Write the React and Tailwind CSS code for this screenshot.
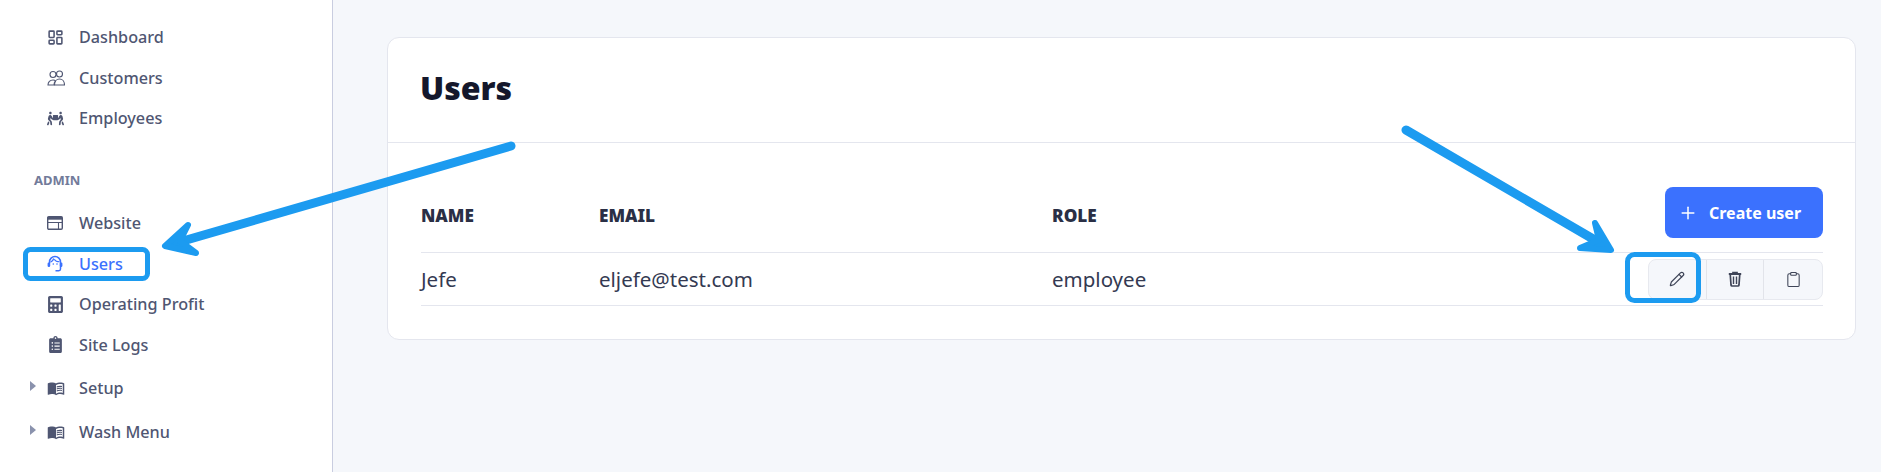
import { Clipboard, LayoutDashboard, Pencil, Plus } from 'lucide-react';
import { FaCalculator, FaClipboardList, FaPeopleCarry } from 'react-icons/fa';
import { MdMenuBook } from 'react-icons/md';

const FONT = "font-['Noto_Sans','Open_Sans',sans-serif]";

const CustomersIcon = () => (
  <svg width="18" height="18" viewBox="0 0 18 18" fill="none" stroke="currentColor" strokeWidth="1.1">
    <circle cx="6" cy="5.500" r="3" />
    <circle cx="12.500" cy="5" r="3" />
    <path d="M1 16c0-3 2-5 5-5 1 0 2 .3 2.500 1-1 1-1.500 2.500-1.500 4z" />
    <path d="M7.500 16c0-3.500 2.200-6 5-6s5 2.500 5 6z" />
  </svg>
);

const WindowIcon = () => (
  <svg width="16" height="14" viewBox="0 0 16 14" fill="none" stroke="currentColor" strokeWidth="1.4">
    <rect x=".7" y=".7" width="14.600" height="12.600" rx="1.200" />
    <path d="M.7 2.200h14.600" strokeWidth="3" />
    <path d="M1 6.500h14M11.500 6.500v6.500" strokeWidth="1.100" />
  </svg>
);

const HeadsetIcon = () => (
  <svg width="16" height="17" viewBox="0 0 16 17" fill="none" stroke="currentColor" strokeWidth="1.500">
    <path d="M2.500 8.500V7a5.500 5.500 0 0 1 11 0v7c0 1-.7 1.700-1.700 1.700H8.500" />
    <path d="M6.700 3.500C6.300 5.200 5.300 6.500 3.500 7.200" strokeWidth="1.200" />
    <path d="M7.200 4.200C8.300 6 10 6.800 12.500 6.800" strokeWidth="1.100" />
    <circle cx="6.300" cy="9" r=".8" fill="currentColor" stroke="none" />
    <circle cx="10" cy="9" r=".8" fill="currentColor" stroke="none" />
    <rect x=".6" y="7.500" width="2.600" height="4.500" rx="1.200" fill="currentColor" stroke="none" />
    <rect x="12.800" y="7.500" width="2.600" height="4.500" rx="1.200" fill="currentColor" stroke="none" />
  </svg>
);

const TrashIcon = () => (
  <svg width="14" height="16" viewBox="0 0 14 16" fill="none" stroke="currentColor" strokeWidth="1.700">
    <path d="M.8 3h12.400" strokeWidth="2" />
    <path d="M4.800 2.500V1.300h4.400v1.200" strokeWidth="1.300" />
    <path d="M2.300 4l.7 10c.1.600.4 1 1 1h6c.6 0 .9-.4 1-1l.7-10" />
    <path d="M5.500 5.500v7.500M8.500 5.500v7.500" strokeWidth="1.400" />
  </svg>
);

const Caret = () => (
  <svg width="6" height="10" viewBox="0 0 6 10" className="absolute top-[2px] left-[-16px] fill-[#8a92ad]">
    <path d="M0 0l6 5-6 5z" />
  </svg>
);

const MAIN_LINKS = [
  { label: 'Dashboard', icon: <LayoutDashboard size={17} strokeWidth={2.2} /> },
  { label: 'Customers', icon: <CustomersIcon /> },
  { label: 'Employees', icon: <FaPeopleCarry size={17} /> },
];

const ADMIN_LINKS = [
  { label: 'Website', icon: <WindowIcon /> },
  { label: 'Users', icon: <HeadsetIcon />, active: true },
  { label: 'Operating Profit', icon: <FaCalculator size={17} /> },
  { label: 'Site Logs', icon: <FaClipboardList size={17} /> },
];

const MENU_LINKS = [
  { label: 'Setup', icon: <MdMenuBook size={18} /> },
  { label: 'Wash Menu', icon: <MdMenuBook size={18} /> },
];

const NavRow = ({ label, icon, active, caret, tall }) => (
  <a
    href="#"
    className={`flex items-center pl-[46px] text-[16.200px] font-medium ${tall ? 'h-[44px]' : 'h-[40.500px]'} ${
      active ? 'text-[#3b71fe]' : 'text-[#4f5672]'
    }`}
  >
    <span className="relative flex w-[33px] items-center pl-[1px]">
      {caret && <Caret />}
      {icon}
    </span>
    {label}
  </a>
);

const Sidebar = () => (
  <aside className="h-full w-[333px] shrink-0 border-r border-[#c9cde0] bg-white pt-[17px]">
    {MAIN_LINKS.map((link) => (
      <NavRow key={link.label} {...link} />
    ))}
    <p className="mt-[32px] mb-[14.500px] pl-[34px] text-[13px] leading-[18px] font-bold text-[#727b9a]">ADMIN</p>
    {ADMIN_LINKS.map((link) => (
      <NavRow key={link.label} {...link} />
    ))}
    <div className="pt-[1px]">
      {MENU_LINKS.map((link) => (
        <NavRow key={link.label} {...link} caret tall />
      ))}
    </div>
  </aside>
);

const ActionCell = ({ children, last }) => (
  <button className={`flex h-full w-[58px] items-center justify-center text-[#3f4558] ${last ? '' : 'border-r border-[#e2e4ea]'}`}>
    {children}
  </button>
);

const UsersCard = () => (
  <section className="h-[303px] w-full rounded-xl border border-[#e4e6ee] bg-white">
    <div className="flex h-[105px] items-center border-b border-[#e4e6ee] pr-[33px] pb-[4px] pl-[32px]">
      <h1 className="text-[32px] font-black text-[#14172b]">Users</h1>
    </div>
    <div className="pr-[32px] pl-[33px] pt-[44px]">
      <div className="grid h-[66px] grid-cols-[178px_453px_1fr_auto] items-start border-b border-[#e4e6ee] text-[17.200px] font-black text-[#2a2f45]">
        <span className="mt-[16px]">NAME</span>
        <span className="mt-[16px]">EMAIL</span>
        <span className="mt-[16px]">ROLE</span>
        <button className="flex h-[51px] w-[158px] items-center gap-[11px] rounded-lg bg-[#3b71fe] pl-[13px] text-base font-bold text-white">
          <Plus size={20} strokeWidth={1.800} />
          Create user
        </button>
      </div>
      <div className="grid h-[53px] grid-cols-[178px_453px_1fr_auto] items-center border-b border-[#e4e6ee] text-[20.500px] text-[#343a52]">
        <span>Jefe</span>
        <span>eljefe@test.com</span>
        <span>employee</span>
        <div className="flex h-[41px] w-[175px] rounded-lg border border-[#e7e9ef] bg-[#f5f7fb]">
          <ActionCell><Pencil size={16} strokeWidth={1.800} /></ActionCell>
          <ActionCell><TrashIcon /></ActionCell>
          <ActionCell last><Clipboard size={17} strokeWidth={1.500} /></ActionCell>
        </div>
      </div>
    </div>
  </section>
);

// annotation drawn over the screenshot
const Annotations = () => (
  <svg className="pointer-events-none absolute inset-0" width="1881" height="472" fill="none" stroke="#1c9bf0" strokeLinecap="round" strokeLinejoin="round">
    <path d="M511 146 176 243" strokeWidth="9" />
    <path d="M188 225 165 246 196 253 180 241z" fill="#1c9bf0" strokeWidth="6" />
    <path d="M1406 130 1600 243" strokeWidth="9" />
    <path d="M1595 223 1611 250 1580 248 1599 240z" fill="#1c9bf0" strokeWidth="6" />
    <rect x="25.500" y="249.500" width="122" height="29" rx="5" strokeWidth="5" />
    <rect x="1627.500" y="254.500" width="71" height="46" rx="7" strokeWidth="5" />
  </svg>
);

export default function App() {
  return (
    <div className={`relative flex h-[472px] w-[1881px] overflow-hidden bg-[#f5f7fb] ${FONT}`}>
      <Sidebar />
      <main className="flex-1 pt-[37px] pr-[25px] pl-[54px]">
        <UsersCard />
      </main>
      <Annotations />
    </div>
  );
}
